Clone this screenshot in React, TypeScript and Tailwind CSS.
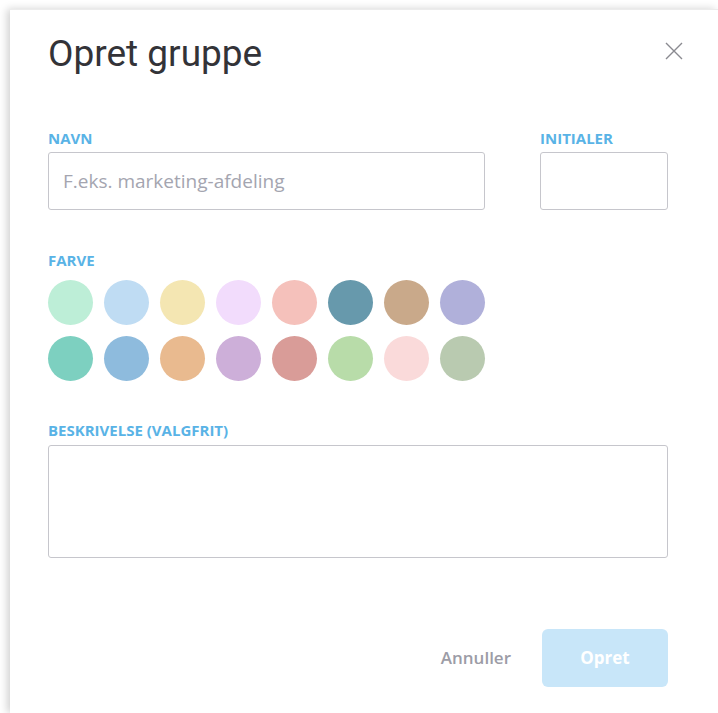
import React from "react";

const swatches = [
  "#bdeed7", "#bfdcf3", "#f4e6b2", "#f2dcfc", "#f5c1bb", "#6799ac", "#c9a98a", "#b0b0da",
  "#7dd0c0", "#8ebbdd", "#e9ba8f", "#cdafd9", "#d99c98", "#b8dca9", "#fadada", "#b9cab0",
];

const openSans = { fontFamily: "'Open Sans', 'Liberation Sans', sans-serif" };

function Label({ children }: { children: React.ReactNode }) {
  return (
    <div className="text-[15px] leading-[16px] font-bold text-[#59b3e6]" style={openSans}>
      {children}
    </div>
  );
}

export default function App() {
  return (
    <div
      className="min-h-[713px] w-[718px] bg-white overflow-hidden"
      style={{ fontFamily: "Roboto, 'Liberation Sans', sans-serif" }}
    >
      <div className="ml-[10px] mt-[9px] h-[704px] bg-white shadow-[-3px_0_8px_rgba(0,0,0,0.18)] border-t border-[#ececec] pl-[38px] pr-[50px] pt-[24px]">
        {/* header */}
        <div className="flex items-start justify-between">
          <h1 className="text-[37px] leading-[40px] font-normal text-[#333338]">Opret gruppe</h1>
          <button className="mt-[7px] mr-[-16px] text-[#8a8a90]" aria-label="Luk">
            <svg width="20" height="20" viewBox="0 0 20 20" fill="none" stroke="currentColor" strokeWidth="1.4">
              <path d="M2 2 L18 18 M18 2 L2 18" />
            </svg>
          </button>
        </div>

        {/* name + initials */}
        <div className="mt-[56px] flex justify-between">
          <div className="w-[437px]">
            <Label>NAVN</Label>
            <div className="mt-[6px] h-[58px] rounded-[3px] border border-[#c6c6cc] flex items-center px-[14px]">
              <span className="text-[19px] text-[#a4a5b0]" style={openSans}>
                F.eks. marketing-afdeling
              </span>
            </div>
          </div>
          <div className="w-[128px]">
            <Label>INITIALER</Label>
            <div className="mt-[6px] h-[58px] rounded-[3px] border border-[#c6c6cc]" />
          </div>
        </div>

        {/* colours */}
        <div className="mt-[42px]">
          <Label>FARVE</Label>
          <div className="mt-[12px] grid grid-cols-[repeat(8,45px)] gap-[11px]">
            {swatches.map((c) => (
              <div key={c} className="h-[45px] w-[45px] rounded-full" style={{ backgroundColor: c }} />
            ))}
          </div>
        </div>

        {/* description */}
        <div className="mt-[41px]">
          <Label>BESKRIVELSE (VALGFRIT)</Label>
          <div className="mt-[7px] h-[113px] rounded-[3px] border border-[#c6c6cc]" />
        </div>

        {/* actions */}
        <div className="mt-[71px] flex items-center justify-end gap-[31px]" style={openSans}>
          <button className="text-[17px] font-semibold text-[#9c9ca6]">Annuller</button>
          <button className="h-[58px] w-[126px] rounded-[6px] bg-[#c8e6f9] text-[17px] font-bold text-white">
            Opret
          </button>
        </div>
      </div>
    </div>
  );
}
